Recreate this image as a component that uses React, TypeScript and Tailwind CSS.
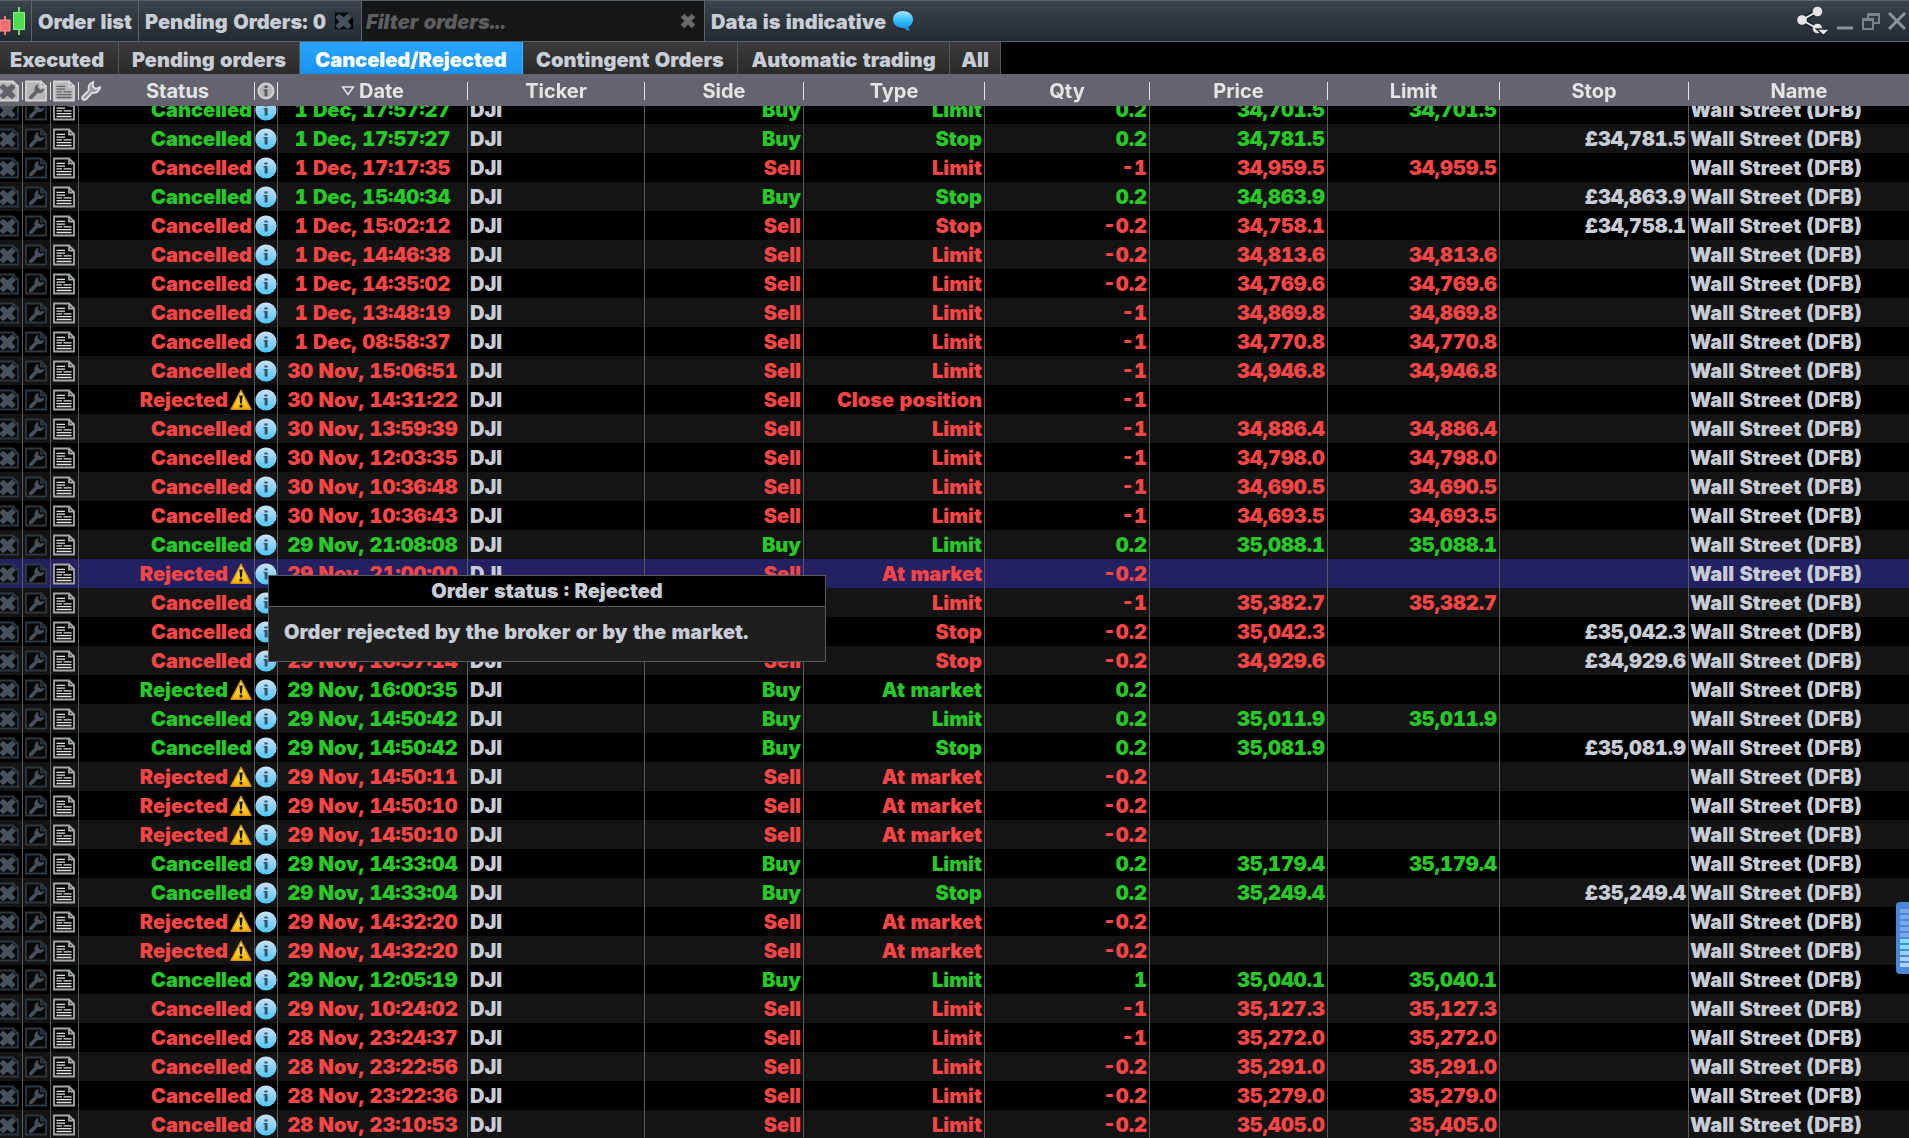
import { useLayoutEffect, useRef, useState } from 'react';

type Order = {
  status: 'Cancelled' | 'Rejected';
  date: string;
  side: 'Buy' | 'Sell';
  type: string;
  qty: string;
  price?: string;
  limit?: string;
  stop?: string;
};

const C = 'Cancelled';
const R = 'Rejected';

function order(
  status: Order['status'],
  date: string,
  side: Order['side'],
  type: string,
  qty: string,
  price?: string,
): Order {
  return {
    status,
    date,
    side,
    type,
    qty,
    price,
    limit: type === 'Limit' ? price : undefined,
    stop: type === 'Stop' ? price : undefined,
  };
}

const orders: Order[] = [
  order(C, '1 Dec, 17:57:27', 'Buy', 'Limit', '0.2', '34,701.5'),
  order(C, '1 Dec, 17:57:27', 'Buy', 'Stop', '0.2', '34,781.5'),
  order(C, '1 Dec, 17:17:35', 'Sell', 'Limit', '-1', '34,959.5'),
  order(C, '1 Dec, 15:40:34', 'Buy', 'Stop', '0.2', '34,863.9'),
  order(C, '1 Dec, 15:02:12', 'Sell', 'Stop', '-0.2', '34,758.1'),
  order(C, '1 Dec, 14:46:38', 'Sell', 'Limit', '-0.2', '34,813.6'),
  order(C, '1 Dec, 14:35:02', 'Sell', 'Limit', '-0.2', '34,769.6'),
  order(C, '1 Dec, 13:48:19', 'Sell', 'Limit', '-1', '34,869.8'),
  order(C, '1 Dec, 08:58:37', 'Sell', 'Limit', '-1', '34,770.8'),
  order(C, '30 Nov, 15:06:51', 'Sell', 'Limit', '-1', '34,946.8'),
  order(R, '30 Nov, 14:31:22', 'Sell', 'Close position', '-1'),
  order(C, '30 Nov, 13:59:39', 'Sell', 'Limit', '-1', '34,886.4'),
  order(C, '30 Nov, 12:03:35', 'Sell', 'Limit', '-1', '34,798.0'),
  order(C, '30 Nov, 10:36:48', 'Sell', 'Limit', '-1', '34,690.5'),
  order(C, '30 Nov, 10:36:43', 'Sell', 'Limit', '-1', '34,693.5'),
  order(C, '29 Nov, 21:08:08', 'Buy', 'Limit', '0.2', '35,088.1'),
  order(R, '29 Nov, 21:00:00', 'Sell', 'At market', '-0.2'),
  order(C, '29 Nov, 17:02:51', 'Sell', 'Limit', '-1', '35,382.7'),
  order(C, '29 Nov, 16:57:14', 'Sell', 'Stop', '-0.2', '35,042.3'),
  order(C, '29 Nov, 16:37:14', 'Sell', 'Stop', '-0.2', '34,929.6'),
  order(R, '29 Nov, 16:00:35', 'Buy', 'At market', '0.2'),
  order(C, '29 Nov, 14:50:42', 'Buy', 'Limit', '0.2', '35,011.9'),
  order(C, '29 Nov, 14:50:42', 'Buy', 'Stop', '0.2', '35,081.9'),
  order(R, '29 Nov, 14:50:11', 'Sell', 'At market', '-0.2'),
  order(R, '29 Nov, 14:50:10', 'Sell', 'At market', '-0.2'),
  order(R, '29 Nov, 14:50:10', 'Sell', 'At market', '-0.2'),
  order(C, '29 Nov, 14:33:04', 'Buy', 'Limit', '0.2', '35,179.4'),
  order(C, '29 Nov, 14:33:04', 'Buy', 'Stop', '0.2', '35,249.4'),
  order(R, '29 Nov, 14:32:20', 'Sell', 'At market', '-0.2'),
  order(R, '29 Nov, 14:32:20', 'Sell', 'At market', '-0.2'),
  order(C, '29 Nov, 12:05:19', 'Buy', 'Limit', '1', '35,040.1'),
  order(C, '29 Nov, 10:24:02', 'Sell', 'Limit', '-1', '35,127.3'),
  order(C, '28 Nov, 23:24:37', 'Sell', 'Limit', '-1', '35,272.0'),
  order(C, '28 Nov, 23:22:56', 'Sell', 'Limit', '-0.2', '35,291.0'),
  order(C, '28 Nov, 23:22:36', 'Sell', 'Limit', '-0.2', '35,279.0'),
  order(C, '28 Nov, 23:10:53', 'Sell', 'Limit', '-0.2', '35,405.0'),
];

const tabs = [
  { label: 'Executed', width: 'w-[119px] pr-1' },
  { label: 'Pending orders', width: 'w-[181px]' },
  { label: 'Canceled/Rejected', width: 'w-[223px]' },
  { label: 'Contingent Orders', width: 'w-[215px]' },
  { label: 'Automatic trading', width: 'w-[212px]' },
  { label: 'All', width: 'w-[51px]' },
];

const columns = ['Ticker', 'Side', 'Type', 'Qty', 'Price', 'Limit', 'Stop', 'Name'];

const CROSS = 'M6.2 3.2l4.3 3.6 4.3-3.6 3.800 3.600-3.800 4.200 3.800 4.200-3.800 3.600-4.300-3.600-4.300 3.600-3.800-3.600 3.800-4.200-3.800-4.200z';
const WRENCH =
  'M3 16.500L9 10.500C8 6.500 10 3 13.500 2L12.800 6.200 16 9l4.500-1.500C20 11.500 16.500 13.800 12.500 13L6.500 19.500C3.500 21.500 1 19 3 16.500z';
const SHEET = 'M1 1h15v5h5v14H1z';
const SHEET_LINES = 'M3.500 5.800H12M3.500 8.600H12M3.500 11.400H9M10.500 11.400H18.500M3.500 14.200H18.500M3.500 17H18.500';

function SheetIcon({ kind, header = false }: { kind: 'cross' | 'wrench' | 'lines'; header?: boolean }) {
  const edge = header ? '#d2d2d5' : kind === 'lines' ? '#a3a8ab' : '#2d3841';
  const ink = header ? '#62626b' : kind === 'lines' ? '#e2e2e0' : '#46515c';
  return (
    <svg className="block shrink-0" width="22" height="22" viewBox="0 0 22 21" aria-hidden="true">
      <path d={SHEET} fill={header ? '#b6b6ba' : '#070808'} stroke={edge} strokeWidth="1.8" />
      <path d="M16 1L21 6" stroke={edge} strokeWidth="1.8" />
      {kind === 'cross' && <path d={CROSS} fill={ink} />}
      {kind === 'wrench' && <path d={WRENCH} fill={ink} transform="translate(2 1.500) scale(.85)" />}
      {kind === 'lines' && <path d={SHEET_LINES} stroke={ink} strokeWidth="1.300" />}
    </svg>
  );
}

function InfoIcon({ header = false }: { header?: boolean }) {
  return (
    <svg className="block shrink-0" width="22" height="22" viewBox="0 0 22 22" aria-hidden="true">
      <defs>
        <linearGradient id="info" x1="0" y1="0" x2="0" y2="1">
          <stop offset="0" stopColor="#cfe0f4" />
          <stop offset="1" stopColor="#4cc6fa" />
        </linearGradient>
      </defs>
      {header ? (
        <>
          <circle cx="11" cy="11" r="7.500" fill="#b4b4b8" stroke="#d0d0d2" strokeWidth="2" />
          <path d="M9.500 5.500h3v2.500h-3zM8.500 9.300h4v7h-3v-5.200h-1z" fill="#5a5a62" />
        </>
      ) : (
        <>
          <circle cx="11" cy="11" r="10.600" fill="url(#info)" />
          <path d="M9.400 5.400h3.200v2.200H9.400zM8.600 9h4v7.400H9.600v-6h-1z" fill="#34566e" />
        </>
      )}
    </svg>
  );
}

function WarningIcon() {
  return (
    <svg className="block" width="22" height="22" viewBox="0 0 22 22" aria-hidden="true">
      <defs>
        <linearGradient id="warn" x1="0" y1="0" x2="0" y2="1">
          <stop offset="0" stopColor="#fff0a0" />
          <stop offset="0.5" stopColor="#ffd83c" />
          <stop offset="1" stopColor="#f9b000" />
        </linearGradient>
      </defs>
      <path d="M11 1.200L21 20.400H1z" fill="url(#warn)" stroke="#d98c10" strokeWidth="1.400" strokeLinejoin="round" />
      <path d="M9.300 6.400h3.400l-.8 8h-1.800zM9.600 15.800h2.800v2.600H9.600z" fill="#1c1500" />
    </svg>
  );
}

function TitleBar() {
  return (
    <header className="flex h-[42px] shrink-0 items-stretch border-y border-[#5c646b] bg-linear-to-b from-[#3c444b] to-[#232a31]">
      <div className="flex w-8 items-center border-r border-[#5c646b]">
        <svg width="26" height="30" viewBox="0 0 26 30" aria-hidden="true">
          <path d="M5 10v5M5 25v4" stroke="#f47a7a" strokeWidth="2" />
          <path d="M0 14h10v11H0z" fill="#f36d6d" stroke="#ff9a9a" />
          <path d="M19 1v5M19 24v5" stroke="#5ae65a" strokeWidth="2" />
          <path d="M13.500 6.500h11v17h-11z" fill="#4fdc4f" stroke="#8df58d" />
        </svg>
      </div>
      <h1 className="flex w-[107px] items-center justify-center border-r border-[#5c646b] pt-0.5">Order list</h1>
      <div className="flex w-[223px] items-center justify-between border-r border-[#5c646b] pl-1.5 pr-1.5">
        <span className="pt-0.5">Pending Orders: 0</span>
        <button aria-label="Clear pending orders">
          <SheetIcon kind="cross" />
        </button>
      </div>
      <div className="flex w-[343px] items-center border-r border-[#5c646b] bg-[#151719] pl-1 pr-2">
        <input
          className="min-w-0 flex-1 bg-transparent pt-0.5 italic text-[#c8ccd4] outline-none placeholder:text-[#5e5e5e]"
          type="text"
          aria-label="Filter orders"
          placeholder="Filter orders..."
        />
        <button aria-label="Clear filter">
          <svg width="16" height="16" viewBox="0 0 16 16" aria-hidden="true">
            <path d="M2.500 2.500l11 11M13.500 2.500l-11 11" stroke="#6a6a6a" strokeWidth="5" />
          </svg>
        </button>
      </div>
      <div className="flex flex-1 items-center gap-1.5 pl-1.5">
        <span className="pt-0.5">Data is indicative</span>
        <svg width="22" height="22" viewBox="0 0 22 22" aria-hidden="true">
          <defs>
            <linearGradient id="bubble" x1="0" y1="0" x2="0" y2="1">
              <stop offset="0" stopColor="#a8e4fc" />
              <stop offset="0.5" stopColor="#2cbcf8" />
              <stop offset="1" stopColor="#1684e8" />
            </linearGradient>
          </defs>
          <path d="M11 1c6 0 10 4 10 8.500 0 3.500-2 6-4.500 7.300.1 2 .8 3.200 2 4.200-2.600 0-4.700-1-6-3H11C5 18 1 14 1 9.500S5 1 11 1z" fill="url(#bubble)" />
        </svg>
      </div>
      <div className="flex items-center gap-2 pr-[3px]">
        <button aria-label="Share">
          <svg width="34" height="32" viewBox="0 0 34 32" aria-hidden="true">
            <path d="M24 6L8 15l16 9" fill="none" stroke="#1c2126" strokeWidth="5" />
            <path d="M24 6L8 15l16 9" fill="none" stroke="#e6e6e6" strokeWidth="2" />
            <circle cx="23.500" cy="6.500" r="4.800" fill="#e6e6e6" />
            <circle cx="8" cy="15" r="4.800" fill="#e6e6e6" />
            <circle cx="23.500" cy="23.500" r="4.800" fill="#e6e6e6" />
            <path d="M22.500 24h13.500l-6.500 6.500z" fill="#e6e6e6" stroke="#23292f" strokeWidth="1.500" />
          </svg>
        </button>
        <button aria-label="Minimize">
          <svg width="18" height="18" viewBox="0 0 18 18" aria-hidden="true">
            <path d="M1 16h16" stroke="#8c9296" strokeWidth="3" />
          </svg>
        </button>
        <button aria-label="Restore">
          <svg width="18" height="18" viewBox="0 0 18 18" fill="none" stroke="#7d8489" strokeWidth="2" aria-hidden="true">
            <path d="M6 6V2h11v9h-5M1 7h10v10H1zM1 8h10M6 3h11" />
          </svg>
        </button>
        <button aria-label="Close">
          <svg width="18" height="18" viewBox="0 0 18 18" aria-hidden="true">
            <path d="M1 1l16 16M17 1L1 17" stroke="#8c9296" strokeWidth="3" />
          </svg>
        </button>
      </div>
    </header>
  );
}

function StatusTooltip() {
  return (
    <div
      role="tooltip"
      className="absolute left-[13px] top-4 z-10 w-[558px] border border-[#5a5a5a] bg-[#1e1e1e] text-left text-[#c8ccd4]"
    >
      <p className="border-b border-[#5a5a5a] bg-black text-center leading-[30px]">Order status : Rejected</p>
      <p className="px-[15px] pb-4 pt-3 leading-[26px]">Order rejected by the broker or by the market.</p>
    </div>
  );
}

function HeadCell({ label }: { label: string }) {
  return (
    <th className="p-0 pt-0.5">
      <div
        className={`flex h-[18px] items-center justify-center ${label === 'Name' ? '' : 'border-r border-[#e4e4e6]'}`}
      >
        {label}
      </div>
    </th>
  );
}

function OrderRow({ item, selected }: { item: Order; selected: boolean }) {
  const tone = item.side === 'Buy' ? 'text-[#28c828]' : 'text-[#f84545]';
  const line = 'border-r border-[#5b5b5b] p-0';
  const right = `${line} pr-0.5 text-right`;
  return (
    <tr className={`h-[29px] ${selected ? 'bg-[#242162]' : 'even:bg-[#141414]'} ${tone}`}>
      <td className={`${line} overflow-hidden`}>
        <button className="flex w-full justify-end pr-[3px]" aria-label="Cancel order">
          <SheetIcon kind="cross" />
        </button>
      </td>
      <td className={line}>
        <button className="flex w-full pl-0.5" aria-label="Modify order">
          <SheetIcon kind="wrench" />
        </button>
      </td>
      <td className={line}>
        <button className="flex w-full pl-0.5" aria-label="Order details">
          <SheetIcon kind="lines" />
        </button>
      </td>
      <td className={right}>
        <div className="flex items-center justify-end gap-0.5">
          {item.status}
          {item.status === 'Rejected' && <WarningIcon />}
        </div>
      </td>
      <td className={`${line} relative`}>
        <button className="flex w-full justify-center" aria-label="Status information">
          <InfoIcon />
        </button>
        {selected && <StatusTooltip />}
      </td>
      <td className={`${line} text-center`}>{item.date}</td>
      <td className={`${line} pl-0.5 text-[#c8ccd4]`}>DJI</td>
      <td className={right}>{item.side}</td>
      <td className={right}>{item.type}</td>
      <td className={right}>{item.qty}</td>
      <td className={right}>{item.price}</td>
      <td className={right}>{item.limit}</td>
      <td className={`${right} text-[#c8ccd4]`}>{item.stop && `£${item.stop}`}</td>
      <td className="p-0 pl-px text-[#c8ccd4]">Wall Street (DFB)</td>
    </tr>
  );
}

export default function App() {
  const [active, setActive] = useState('Canceled/Rejected');
  const scroller = useRef<HTMLDivElement>(null);

  useLayoutEffect(() => {
    if (scroller.current) scroller.current.scrollTop = 11;
  }, []);

  return (
    <div className="relative flex h-screen flex-col overflow-hidden bg-black font-['Inter','Liberation_Sans',sans-serif] text-[20px] font-black leading-6 tabular-nums whitespace-nowrap text-[#c8ccd4]">
      <TitleBar />
      <nav className="flex h-8 shrink-0">
        {tabs.map((tab) => (
          <button
            key={tab.label}
            onClick={() => setActive(tab.label)}
            className={`flex items-center justify-center border-r pt-1 ${tab.width} ${
              active === tab.label
                ? 'border-[#3cb4ff] bg-linear-to-b from-[#2aa5fb] to-[#1a93f2] text-white'
                : 'border-[#55585b] bg-linear-to-b from-[#3b3b3b] to-[#2b2b2b]'
            }`}
          >
            {tab.label}
          </button>
        ))}
      </nav>
      <div ref={scroller} className="min-h-0 flex-1 overflow-y-auto [scrollbar-width:none]">
        <table className="w-full table-fixed border-separate border-spacing-0">
          <colgroup>
            <col className="w-[23px]" />
            <col className="w-[28px]" />
            <col className="w-[28px]" />
            <col className="w-[176px]" />
            <col className="w-[23px]" />
            <col className="w-[190px]" />
            <col className="w-[177px]" />
            <col className="w-[159px]" />
            <col className="w-[181px]" />
            <col className="w-[165px]" />
            <col className="w-[178px]" />
            <col className="w-[172px]" />
            <col className="w-[189px]" />
            <col />
          </colgroup>
          <thead className="sticky top-0 z-20 bg-[#64646e] text-[#e4e4e6]">
            <tr className="h-8">
              <th className="overflow-hidden p-0 pt-0.5">
                <div className="flex h-[18px] items-center justify-end border-r border-[#e4e4e6] pr-[3px]">
                  <SheetIcon kind="cross" header />
                </div>
              </th>
              <th className="p-0 pt-0.5">
                <div className="flex h-[18px] items-center border-r border-[#e4e4e6] pl-0.5">
                  <SheetIcon kind="wrench" header />
                </div>
              </th>
              <th className="p-0 pt-0.5">
                <div className="flex h-[18px] items-center border-r border-[#e4e4e6] pl-0.5">
                  <SheetIcon kind="lines" header />
                </div>
              </th>
              <th className="p-0 pt-0.5">
                <div className="flex h-[18px] items-center border-r border-[#e4e4e6] pl-0.5">
                  <svg className="shrink-0" width="20" height="20" viewBox="1 1 20.500 20.500" aria-hidden="true">
                    <path d={WRENCH} fill="#9a9aa0" stroke="#e4e4e6" strokeWidth="1.800" />
                  </svg>
                  <span className="flex-1 text-center">Status</span>
                </div>
              </th>
              <th className="p-0 pt-0.5">
                <div className="flex h-[18px] items-center justify-center border-r border-[#e4e4e6]">
                  <InfoIcon header />
                </div>
              </th>
              <th className="p-0 pt-0.5">
                <div className="flex h-[18px] items-center justify-center gap-1 border-r border-[#e4e4e6]">
                  <svg width="14" height="10" viewBox="0 0 14 10" aria-hidden="true">
                    <path d="M1.500 1h11L7 8.500z" fill="none" stroke="#e4e4e6" strokeWidth="1.500" />
                  </svg>
                  Date
                </div>
              </th>
              {columns.map((label) => (
                <HeadCell key={label} label={label} />
              ))}
            </tr>
          </thead>
          <tbody>
            {orders.map((item, i) => (
              <OrderRow key={i} item={item} selected={i === 16} />
            ))}
          </tbody>
        </table>
      </div>
      <div className="absolute right-0 top-[902px] flex h-[72px] w-[13px] flex-col justify-center gap-0.5 rounded-l-sm bg-[#4a88d8] py-1 pl-1">
        <span className="h-1 bg-[#7aa8ea]" />
        <span className="h-1 bg-[#7aa8ea]" />
        <span className="h-1 bg-[#7aa8ea]" />
        <span className="h-1 bg-[#7aa8ea]" />
        <span className="h-1 bg-[#7aa8ea]" />
        <span className="h-1 bg-[#7fe0fa]" />
        <span className="h-1 bg-[#7fe0fa]" />
        <span className="h-1 bg-[#98d0fa]" />
        <span className="h-1 bg-[#a8d0fa]" />
        <span className="h-1 bg-[#b0d0fa]" />
      </div>
    </div>
  );
}
